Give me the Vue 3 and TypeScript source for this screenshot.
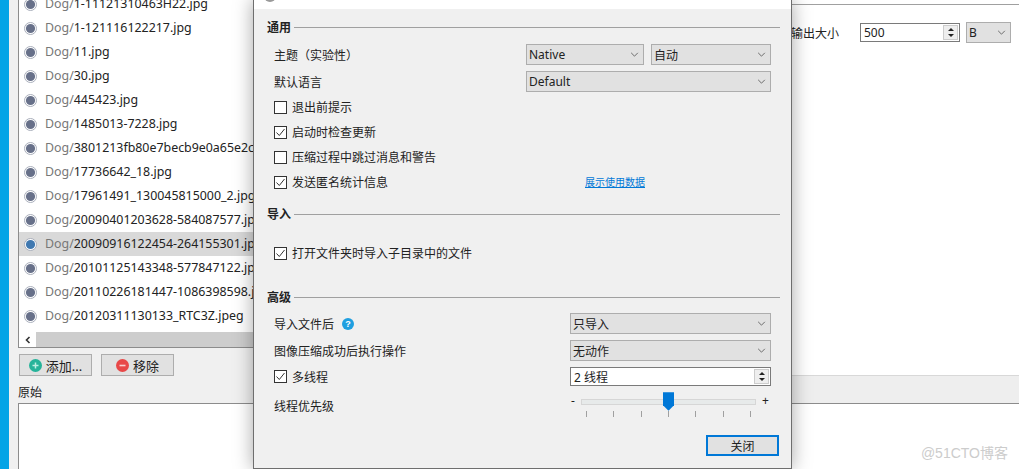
<script setup lang="ts">
const files = [
  '1-11121310463H22.jpg',
  '1-121116122217.jpg',
  '11.jpg',
  '30.jpg',
  '445423.jpg',
  '1485013-7228.jpg',
  '3801213fb80e7becb9e0a65e2c9d.jpg',
  '17736642_18.jpg',
  '17961491_130045815000_2.jpg',
  '20090401203628-584087577.jpg',
  '20090916122454-264155301.jpg',
  '20101125143348-577847122.jpg',
  '20110226181447-1086398598.jpg',
  '20120311130133_RTC3Z.jpeg',
]
const selectedIndex = 10
const ticks = [0, 1, 2, 3, 4, 5, 6]
</script>

<template>
  <div class="page">
    <div class="strip"></div>
    <div class="left">
      <div class="list">
        <div class="rows">
          <div v-for="(f, i) in files" :key="f" class="row" :class="{ selected: i === selectedIndex }">
            <svg class="dot" width="13" height="13" viewBox="0 0 13 13">
              <circle cx="6.5" cy="6.5" r="6" fill="#fff" stroke="#a9aebb" />
              <circle cx="6.5" cy="6.5" r="4.6" :fill="i === selectedIndex ? '#3f78b0' : '#677089'" />
            </svg>
            <span class="dir">Dog/</span><span class="name">{{ f }}</span>
          </div>
        </div>
        <div class="hscroll">
          <div class="arrow">
            <svg width="8" height="8" viewBox="0 0 8 8"><path d="M5.5 1 L2.5 4 L5.5 7" fill="none" stroke="#333" stroke-width="1.6" /></svg>
          </div>
          <div class="thumb"></div>
        </div>
      </div>
      <div class="actions">
        <button class="btn">
          <svg width="13" height="13" viewBox="0 0 13 13"><circle cx="6.5" cy="6.5" r="6.5" fill="#26b39a" /><path d="M6.5 3.5v6M3.5 6.5h6" stroke="#bdeee3" stroke-width="1.5" /></svg>
          <span>添加...</span>
        </button>
        <button class="btn">
          <svg width="13" height="13" viewBox="0 0 13 13"><circle cx="6.5" cy="6.5" r="6.5" fill="#e84848" /><path d="M3.5 6.5h6" stroke="#f8d0d0" stroke-width="1.6" /></svg>
          <span>移除</span>
        </button>
      </div>
      <div class="orig-label">原始</div>
      <div class="orig-box"></div>
    </div>

    <div class="right">
      <div class="output">
        <span class="out-label">输出大小</span>
        <div class="spin out-spin">
          <span>500</span>
          <div class="spin-btns"><i class="up"></i><i class="down"></i></div>
        </div>
        <div class="select out-unit">
          <span>B</span>
          <svg class="chev" width="9" height="5" viewBox="0 0 10 6"><path d="M1 1 L5 5 L9 1" fill="none" stroke="#555" /></svg>
        </div>
      </div>
      <div class="band"></div>
    </div>

    <div class="dialog">
      <div class="titlebar"><span class="win-icon"></span></div>
      <div class="body">
        <div class="section-head first"><span>通用</span><hr /></div>
        <div class="line l-theme">
          <span class="lbl">主题（实验性）</span>
          <div class="controls c526">
            <div class="select w118"><span>Native</span><svg class="chev" width="9" height="5" viewBox="0 0 10 6"><path d="M1 1 L5 5 L9 1" fill="none" stroke="#555" /></svg></div>
            <div class="select w120"><span>自动</span><svg class="chev" width="9" height="5" viewBox="0 0 10 6"><path d="M1 1 L5 5 L9 1" fill="none" stroke="#555" /></svg></div>
          </div>
        </div>
        <div class="line l-lang">
          <span class="lbl">默认语言</span>
          <div class="controls c526">
            <div class="select grow"><span>Default</span><svg class="chev" width="9" height="5" viewBox="0 0 10 6"><path d="M1 1 L5 5 L9 1" fill="none" stroke="#555" /></svg></div>
          </div>
        </div>
        <div class="checks">
          <div class="check"><span class="box"></span>退出前提示</div>
          <div class="check"><span class="box"><svg width="11" height="11" viewBox="0 0 11 11"><path d="M1.5 5.5 L4.3 8.5 L9.5 2" fill="none" stroke="#333" /></svg></span>启动时检查更新</div>
          <div class="check"><span class="box"></span>压缩过程中跳过消息和警告</div>
          <div class="check">
            <span class="box"><svg width="11" height="11" viewBox="0 0 11 11"><path d="M1.5 5.5 L4.3 8.5 L9.5 2" fill="none" stroke="#333" /></svg></span>发送匿名统计信息
            <a class="link">展示使用数据</a>
          </div>
        </div>

        <div class="section-head s-import"><span>导入</span><hr /></div>
        <div class="check c-sub"><span class="box"><svg width="11" height="11" viewBox="0 0 11 11"><path d="M1.5 5.5 L4.3 8.5 L9.5 2" fill="none" stroke="#333" /></svg></span>打开文件夹时导入子目录中的文件</div>

        <div class="section-head s-adv"><span>高级</span><hr /></div>
        <div class="line l-after">
          <span class="lbl">导入文件后<svg class="help" width="12" height="12" viewBox="0 0 12 12"><circle cx="6" cy="6" r="6" fill="#1f9fe0" /><text x="6" y="9.2" text-anchor="middle" font-size="9" font-weight="700" fill="#fff" font-family="Liberation Sans, sans-serif">?</text></svg></span>
          <div class="controls c570">
            <div class="select grow"><span>只导入</span><svg class="chev" width="9" height="5" viewBox="0 0 10 6"><path d="M1 1 L5 5 L9 1" fill="none" stroke="#555" /></svg></div>
          </div>
        </div>
        <div class="line l-done">
          <span class="lbl">图像压缩成功后执行操作</span>
          <div class="controls c570">
            <div class="select grow"><span>无动作</span><svg class="chev" width="9" height="5" viewBox="0 0 10 6"><path d="M1 1 L5 5 L9 1" fill="none" stroke="#555" /></svg></div>
          </div>
        </div>
        <div class="line l-thread">
          <div class="check inline"><span class="box"><svg width="11" height="11" viewBox="0 0 11 11"><path d="M1.5 5.5 L4.3 8.5 L9.5 2" fill="none" stroke="#333" /></svg></span>多线程</div>
          <div class="controls c570">
            <div class="spin grow"><span>2 线程</span><div class="spin-btns"><i class="up"></i><i class="down"></i></div></div>
          </div>
        </div>
        <div class="line l-prio">
          <span class="lbl">线程优先级</span>
          <div class="controls c570 slider-wrap">
            <div class="slider-top">
              <span class="pm minus">-</span>
              <div class="track"><svg class="handle" width="11" height="19" viewBox="0 0 12 20"><path d="M0 0 H12 V14 L6 20 L0 14 Z" fill="#0078d7" /></svg></div>
              <span class="pm plus">+</span>
            </div>
            <div class="ticks"><i v-for="t in ticks" :key="t"></i></div>
          </div>
        </div>
        <div class="footer"><button class="close">关闭</button></div>
      </div>
    </div>

    <div class="watermark">@51CTO博客</div>
  </div>
</template>

<style>
html, body { margin: 0; background: #fff; }
</style>

<style scoped>
.page {
  position: relative;
  width: 1019px;
  height: 469px;
  overflow: hidden;
  display: flex;
  background: #fff;
  font-family: "Noto Sans", "Noto Sans CJK SC", sans-serif;
  font-size: 12px;
  color: #222;
}
.strip { width: 9px; flex: none; background: #03a4e6; }
.left {
  width: 245px;
  flex: none;
  background: #f0f0f0;
  padding-left: 9px;
  display: flex;
  flex-direction: column;
  box-sizing: border-box;
}
.list {
  height: 348px;
  flex: none;
  background: #fff;
  border: 1px solid #8c8c8c;
  border-width: 0 0 1px 1px;
  box-sizing: border-box;
  overflow: hidden;
  display: flex;
  flex-direction: column;
}
.rows { margin-top: -8px; flex: none; height: 340px; }
.row {
  height: 24px;
  display: flex;
  align-items: center;
  white-space: nowrap;
  padding-left: 5px;
  font-size: 12.4px;
}
.row.selected { background: #d9d9d9; }
.dot { flex: none; margin-right: 8px; }
.dir { color: #777; margin-bottom: 2px; }
.name { color: #222; margin-bottom: 2px; }
.hscroll { height: 15px; display: flex; background: #fff; flex: none; }
.arrow { width: 17px; display: flex; align-items: center; justify-content: center; }
.thumb { flex: 1; background: #cdcdcd; }
.actions { display: flex; gap: 9px; margin-top: 6px; padding-left: 1px; }
.btn {
  width: 73px;
  height: 22px;
  box-sizing: border-box;
  background: #e1e1e1;
  border: 1px solid #adadad;
  display: flex;
  align-items: center;
  justify-content: center;
  gap: 4px;
  padding: 0;
  font: inherit;
  font-size: 13px;
  color: #222;
}
.orig-label { margin-top: 7px; height: 20px; line-height: 20px; font-size: 12px; }
.orig-box { flex: 1; background: #fff; border: 1px solid #8c8c8c; border-right: 0; border-bottom: 0; }

.right { flex: 1; background: #fff; border-top: 1px solid #a0a0a0; margin-top: 4px; }
.output { display: flex; align-items: center; margin-top: 17px; height: 21px; padding-left: 537px; }
.out-label { width: 69px; flex: none; font-size: 12px; }
.band {
  margin-top: 332px;
  height: 29px;
  box-sizing: border-box;
  background: #eeeeee;
  border-top: 1px solid #d8d8d8;
  border-bottom: 1px solid #8c8c8c;
}
.spin {
  height: 19px;
  box-sizing: border-box;
  border: 1px solid #7a7a7a;
  background: #fff;
  display: flex;
  align-items: center;
  justify-content: space-between;
  padding-left: 3px;
  font-size: 12px;
}
.out-spin { width: 100px; margin-right: 6px; }
.spin-btns { width: 15px; height: 15px; margin-right: 1px; display: flex; flex-direction: column; background: #eee; box-sizing: border-box; border: 1px solid #ccc; align-items: center; justify-content: space-around; }
.spin-btns i { width: 0; height: 0; border-left: 3px solid transparent; border-right: 3px solid transparent; }
.spin-btns .up { border-bottom: 3px solid #222; }
.spin-btns .down { border-top: 3px solid #222; }
.select {
  height: 21px;
  box-sizing: border-box;
  background: #e1e1e1;
  border: 1px solid #adadad;
  display: flex;
  align-items: center;
  justify-content: space-between;
  padding: 0 4px 0 2px;
  font-size: 12px;
}
.out-unit { width: 45px; }
.chev { flex: none; }

.dialog {
  position: absolute;
  left: 253px;
  top: -1px;
  width: 539px;
  height: 470px;
  box-sizing: border-box;
  background: #f0f0f0;
  border: 1px solid #6e6e6e;
  box-shadow: 0 0 18px rgba(0, 0, 0, 0.35);
}
.titlebar { height: 9px; background: #fff; overflow: hidden; padding-left: 10px; }
.win-icon { display: block; width: 12px; height: 12px; margin-top: -10px; border-radius: 50%; background: #999; }
.body { padding: 0 11px 0 13px; display: flex; flex-direction: column; }
.section-head { display: flex; align-items: center; gap: 3px; height: 18px; font-weight: 700; font-size: 12px; }
.section-head.first { margin-top: 9px; }
.section-head span { margin-bottom: 1px; }
.section-head hr { flex: 1; margin: 0; border: 0; border-top: 1px solid #a0a0a0; }
.line { display: flex; align-items: center; height: 21px; padding-left: 7px; }
.lbl { display: flex; align-items: center; }
.help { margin-left: 8px; }
.controls { position: absolute; display: flex; gap: 7px; right: 20px; }
.c526 { left: 272px; }
.c570 { left: 316px; }
.grow { flex: 1; }
.w118 { width: 118px; }
.w120 { width: 120px; }
.l-theme { margin-top: 8px; }
.l-lang { margin-top: 6px; }
.checks { display: flex; flex-direction: column; gap: 5px; margin-top: 5px; padding-left: 7px; }
.check { display: flex; align-items: center; height: 20px; position: relative; }
.box {
  width: 13px;
  height: 13px;
  box-sizing: border-box;
  border: 1px solid #333;
  background: #fff;
  margin-right: 5px;
  display: flex;
  align-items: center;
  justify-content: center;
}
.link { position: absolute; left: 311px; font-size: 10px; color: #0078d7; text-decoration: underline; margin-bottom: 2px; }
.s-import { margin-top: 13px; }
.c-sub { margin-top: 20px; margin-left: 7px; }
.s-adv { margin-top: 25px; }
.l-after { margin-top: 7px; }
.l-done { margin-top: 6px; }
.l-thread { margin-top: 5px; }
.l-prio { margin-top: 5px; height: 26px; align-items: flex-start; }
.l-prio .lbl { margin-top: 5px; }
.slider-wrap { flex-direction: column; gap: 0; }
.slider-top { display: flex; align-items: center; height: 19px; }
.pm { text-align: center; font-size: 12px; margin-bottom: 2px; }
.pm.minus { width: 11px; text-align: left; padding-left: 1px; box-sizing: border-box; }
.pm.plus { width: 15px; padding-left: 6px; box-sizing: border-box; text-align: left; }
.track { flex: 1; height: 4px; background: #e7eaea; border: 1px solid #d6d6d6; position: relative; }
.handle { position: absolute; left: 81px; top: -8px; }
.ticks { display: flex; justify-content: space-between; padding: 0 20px 0 16px; height: 6px; }
.ticks i { width: 1px; height: 6px; background: #a0a0a0; }
.footer { display: flex; justify-content: flex-end; margin-top: 17px; padding-right: 1px; }
.close {
  width: 73px;
  height: 21px;
  box-sizing: border-box;
  background: #e1e1e1;
  border: 2px solid #0078d7;
  font: inherit;
  font-size: 12px;
  color: #222;
  padding: 0;
}
.watermark {
  position: absolute;
  right: 11px;
  bottom: 7px;
  font-size: 14px;
  color: #cccccc;
  font-family: "Liberation Sans", "Noto Sans CJK SC", sans-serif;
}
</style>
